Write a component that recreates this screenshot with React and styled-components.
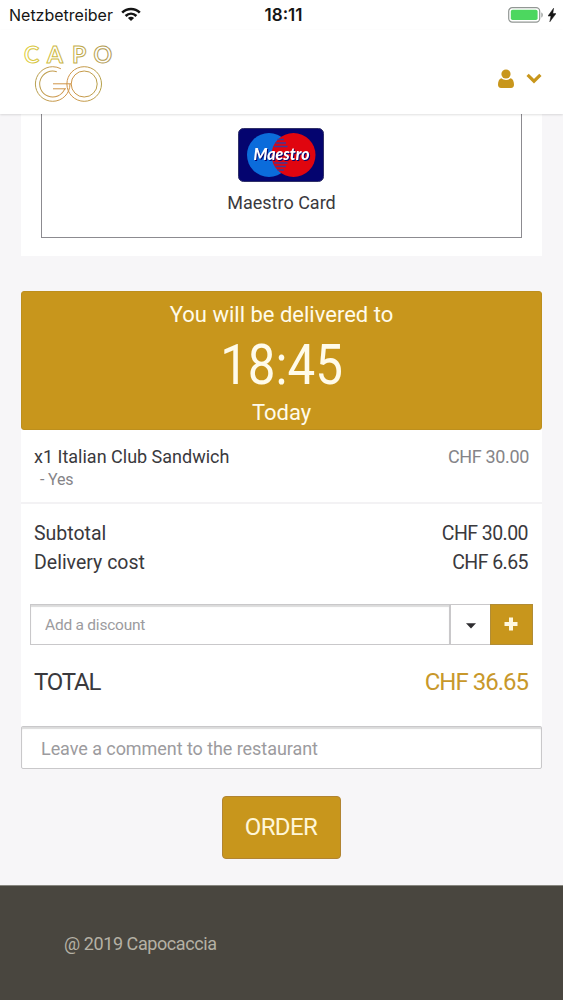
import React from 'react';
import styled, { createGlobalStyle } from 'styled-components';

const GlobalStyle = createGlobalStyle`
  * {
    box-sizing: border-box;
  }
  body {
    margin: 0;
    background-color: #f7f6f8;
    color: #3a393d;
    font-family: Roboto, "Liberation Sans", sans-serif;
  }
`

const Page = styled.div`
  height: 1000px;
  overflow: hidden;
  display: flex;
  flex-direction: column;
`
const StatusBar = styled.div`
  height: 30px;
  flex-shrink: 0;
  display: grid;
  grid-template-columns: 1fr auto 1fr;
  align-items: center;
  padding: 0 7px 1px 9px;
  background-color: #fff;
  color: #151515;
  font-family: Inter, sans-serif;
  font-size: 16px;
`
const StatusSide = styled.div`
  display: flex;
  align-items: center;
  justify-content: ${props => props.$right ? 'flex-end' : 'flex-start'};
  gap: ${props => props.$right ? '4px' : '8px'};
`
const Clock = styled.div`
  padding-left: 2px;
  font-weight: 600;
  font-size: 17px;
`
const Navbar = styled.div`
  height: 84px;
  flex-shrink: 0;
  display: flex;
  justify-content: space-between;
  align-items: flex-start;
  padding: 8px 21px 0 22px;
  background-color: #fff;
  box-shadow: 0 1px 2px rgba(0, 0, 0, 0.12);
  z-index: 1;
`
const Account = styled.button`
  display: flex;
  align-items: center;
  gap: 12px;
  margin-top: 31px;
  padding: 0;
  border: none;
  background: none;
  cursor: pointer;
`
const Content = styled.div`
  padding: 0 21px;
`
const PaymentPanel = styled.div`
  height: 142px;
  margin-bottom: 35px;
  padding: 0 20px;
  background-color: #fff;
`
const PaymentOption = styled.div`
  height: 124px;
  display: flex;
  flex-direction: column;
  align-items: center;
  padding: 14px 0 0;
  border: 1px solid #8c8b90;
  border-top: none;
  font-size: 18px;
  line-height: 24px;
`
const PaymentName = styled.div`
  margin-top: 9px;
`
const Delivery = styled.div`
  height: 139px;
  padding-top: 9px;
  border-radius: 3px;
  border: 1px solid #bd8f1d;
  background-color: #c8961c;
  color: #fffbea;
  text-align: center;
  font-size: 22px;
  line-height: 28px;
`
const DeliveryTime = styled.div`
  padding-top: 3px;
  font-size: 56px;
  line-height: 67px;
  transform: scaleX(0.88);
`
const Summary = styled.div`
  height: 296px;
  background-color: #fff;
`
const Item = styled.div`
  height: 74px;
  padding: 15px 13px 0 13px;
  border-bottom: 2px solid #f3f2f4;
  font-size: 18px;
  line-height: 24px;
`
const Row = styled.div`
  display: flex;
  justify-content: space-between;
`
const Price = styled.span`
  color: #858488;
  letter-spacing: -0.35px;
`
const Extra = styled.div`
  padding-left: 6px;
  color: #858488;
  font-size: 16px;
  line-height: 21px;
  letter-spacing: -0.2px;
`
const Costs = styled.div`
  padding: 15px 14px 0 13px;
  font-size: 19.5px;
  line-height: 29px;
`
const CostPrice = styled.span`
  letter-spacing: -0.55px;
`
const Discount = styled.div`
  display: flex;
  height: 41px;
  margin: 27px 9px 0;
`
const Input = styled.input`
  flex: 1;
  min-width: 0;
  padding: 0 14px;
  border: 1px solid #c9c8ca;
  border-right-width: 2px;
  background-color: #fff;
  box-shadow: inset 0 2px 1px rgba(0, 0, 0, 0.14);
  color: #3a393d;
  font-family: inherit;
  font-size: 15.5px;
  letter-spacing: -0.23px;
  outline: none;
  &::placeholder {
    color: #9c9b9e;
    opacity: 1;
  }
`
const CommentInput = styled(Input)`
  display: block;
  width: 100%;
  height: 43px;
  padding: 2px 19px 0;
  border-right-width: 1px;
  border-radius: 2px;
  font-size: 18px;
  letter-spacing: -0.06px;
`
const Dropdown = styled.button`
  width: 39px;
  padding: 0;
  border: 1px solid #c9c8ca;
  border-width: 1px 0;
  background-color: #fff;
  cursor: pointer;
`
const AddButton = styled.button`
  width: 43px;
  padding: 2px 1px 0 0;
  border: 1px solid #b18c35;
  background-color: #c8961c;
  cursor: pointer;
`
const Total = styled(Row)`
  padding: 19px 14px 0 13px;
  font-size: 24px;
  line-height: 36px;
  letter-spacing: -1.2px;
`
const TotalPrice = styled.span`
  color: #c8982b;
  letter-spacing: -1px;
`
const OrderButton = styled.button`
  display: block;
  width: 119px;
  height: 63px;
  margin: 27px auto 0;
  padding: 0 1px 1px 0;
  border: 1px solid #b18432;
  border-radius: 4px;
  background-color: #c8961c;
  color: #fff6d8;
  font-family: inherit;
  font-size: 24px;
  letter-spacing: -0.6px;
  cursor: pointer;
`
const Footer = styled.div`
  height: 115px;
  flex-shrink: 0;
  margin-top: auto;
  padding: 46px 64px 0;
  border-top: 1px solid #87867f;
  background-color: #49463f;
  color: #b5b1a5;
  font-size: 18px;
  line-height: 24px;
  letter-spacing: -0.42px;
`

const Wifi = () => (
  <svg width="20" height="15" viewBox="0 0 20 15" fill="none" stroke="#151515" strokeWidth="2.6">
    <path d="M1.2 5.6C6.2 .7 13.8 .7 18.8 5.6" />
    <path d="M4.6 9C7.8 5.9 12.2 5.9 15.4 9" />
    <path d="M10 14L6.9 10.9C8.7 9.4 11.3 9.4 13.1 10.9Z" fill="#151515" stroke="none" />
  </svg>
)

const Battery = () => (
  <svg width="36" height="16" viewBox="0 0 36 16">
    <rect x=".7" y=".7" width="31" height="14.4" rx="3.6" fill="#fff" stroke="#929794" strokeWidth="1.2" />
    <rect x="2.8" y="2.8" width="26.8" height="10.2" rx="1.8" fill="#4cd75f" />
    <path d="M33.4 5.4C35.2 6 35.2 9.8 33.4 10.4Z" fill="#929794" />
  </svg>
)

const Bolt = () => (
  <svg width="8" height="14" viewBox="0 0 8 14">
    <path d="M5.6 .2L0 8H3L1.8 13.8L8 5.6H4.8Z" fill="#151515" stroke="#151515" strokeWidth=".5" />
  </svg>
)

// wordmark over two interlocking double rings
const Logo = () => (
  <svg width="94" height="69" viewBox="0 -5 94 69" fill="none" role="img" aria-label="Capo Go">
    <defs>
      <linearGradient id="capo" gradientUnits="userSpaceOnUse" x1="2" y1="0" x2="91" y2="0">
        <stop offset="0" stopColor="#dccb3a" />
        <stop offset="0.5" stopColor="#c6b045" />
        <stop offset="1" stopColor="#ab9350" />
      </linearGradient>
      <linearGradient id="go" gradientUnits="userSpaceOnUse" x1="12" y1="0" x2="80" y2="0">
        <stop offset="0" stopColor="#b7a04f" />
        <stop offset="0.5" stopColor="#d19448" />
        <stop offset="1" stopColor="#b5a04a" />
      </linearGradient>
    </defs>
    <text x="2 25 50 71.5" y="20" fontFamily="Lato, sans-serif" fontSize="23" fontWeight="700" stroke="url(#capo)" strokeWidth="1">CAPO</text>
    <g stroke="url(#go)" strokeWidth="1">
      <circle cx="62.2" cy="41" r="17.3" />
      <circle cx="62.2" cy="41" r="13" />
      <circle cx="30.7" cy="41" r="17.3" strokeDasharray="89.5 30" />
      <circle cx="30.7" cy="41" r="13" strokeDasharray="60 30" transform="rotate(22 30.7 41)" />
    </g>
    <path d="M31 40.8H49M31 45.8H44" stroke="#d19448" />
  </svg>
)

const User = () => (
  <svg width="16" height="20" viewBox="0 0 16 20" fill="#c8961c">
    <circle cx="8" cy="5" r="4.6" />
    <path d="M3.4 9.2C6 11.5 10 11.5 12.6 9.2C15 9.8 16 12.5 16 15.6C16 17.8 15 19 13 19H3C1 19 0 17.8 0 15.6C0 12.5 1 9.8 3.4 9.2Z" />
  </svg>
)

const Chevron = () => (
  <svg width="16" height="13" viewBox="0 0 16 13" fill="none" stroke="#c8961c" strokeWidth="3.2">
    <path d="M1.6 1.9L8 8.2L14.4 1.9" />
  </svg>
)

const Maestro = () => (
  <svg width="87" height="54" viewBox="0 0 87 54">
    <rect x=".5" y=".5" width="85" height="53" rx="5" fill="#04046f" stroke="#303068" />
    <circle cx="31" cy="27" r="22" fill="#0b6cdb" />
    <circle cx="55.5" cy="27" r="22" fill="#e0050f" />
    <path d="M39.5 11.5H46M37.5 15H48M36 18.5H49.5M36 35H49.5M37.5 38.5H48M39.5 42H46" stroke="#3b3a98" strokeWidth="1.6" />
    <text x="15.5" y="32" fontFamily="Lato, sans-serif" fontSize="16" fontWeight="900" fontStyle="italic" fill="#fff" style={{ filter: 'drop-shadow(1px 1px 0 #04046f)' }} textLength="56" lengthAdjust="spacingAndGlyphs">Maestro</text>
  </svg>
)

const costs = [
  { label: 'Subtotal', price: 'CHF 30.00' },
  { label: 'Delivery cost', price: 'CHF 6.65' }
]

class App extends React.Component {
  constructor(props) {
    super(props)
    this.state = {
      discount: '',
      comment: ''
    }
  }

  handleDiscount(e) {
    this.setState({
      discount: e.target.value
    })
  }

  handleComment(e) {
    this.setState({
      comment: e.target.value
    })
  }

  render() {
    return (
      <Page>
        <GlobalStyle />
        <StatusBar>
          <StatusSide>Netzbetreiber <Wifi /></StatusSide>
          <Clock>18:11</Clock>
          <StatusSide $right><Battery /><Bolt /></StatusSide>
        </StatusBar>
        <Navbar>
          <Logo />
          <Account><User /><Chevron /></Account>
        </Navbar>
        <Content>
          <PaymentPanel>
            <PaymentOption>
              <Maestro />
              <PaymentName>Maestro Card</PaymentName>
            </PaymentOption>
          </PaymentPanel>
          <Delivery>
            <div>You will be delivered to</div>
            <DeliveryTime>18:45</DeliveryTime>
            <div>Today</div>
          </Delivery>
          <Summary>
            <Item>
              <Row>
                <span>x1 Italian Club Sandwich</span>
                <Price>CHF 30.00</Price>
              </Row>
              <Extra>- Yes</Extra>
            </Item>
            <Costs>
              {costs.map((cost) => (
                <Row key={cost.label}>
                  <span>{cost.label}</span>
                  <CostPrice>{cost.price}</CostPrice>
                </Row>
              ))}
            </Costs>
            <Discount>
              <Input type="text" placeholder="Add a discount" value={this.state.discount} onChange={this.handleDiscount.bind(this)} />
              <Dropdown>
                <svg width="10" height="6" viewBox="0 0 10 6"><path d="M0 .3H10L5 5.6Z" fill="#2e2d30" /></svg>
              </Dropdown>
              <AddButton>
                <svg width="14" height="14" viewBox="0 0 14 14"><path d="M7 .5V13.5M.5 7H13.5" stroke="#fff8e0" strokeWidth="4" /></svg>
              </AddButton>
            </Discount>
            <Total>
              <span>TOTAL</span>
              <TotalPrice>CHF 36.65</TotalPrice>
            </Total>
          </Summary>
          <CommentInput type="text" placeholder="Leave a comment to the restaurant" value={this.state.comment} onChange={this.handleComment.bind(this)} />
          <OrderButton>ORDER</OrderButton>
        </Content>
        <Footer>@ 2019 Capocaccia</Footer>
      </Page>
    )
  }
}

export default App;
